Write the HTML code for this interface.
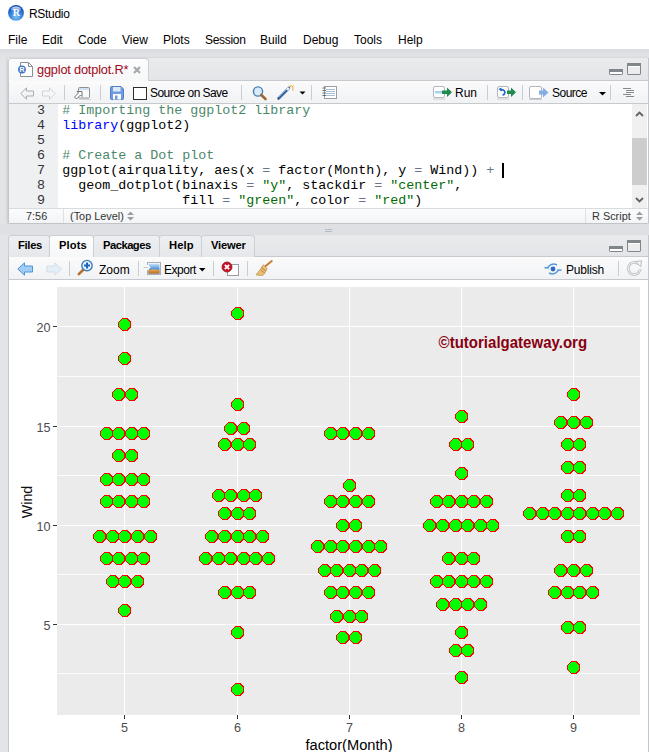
<!DOCTYPE html>
<html><head><meta charset="utf-8">
<style>
*{margin:0;padding:0;box-sizing:border-box}
html,body{width:649px;height:752px;overflow:hidden}
body{position:relative;background:#e3e4e7;font-family:"Liberation Sans",sans-serif;color:#000}
.a{position:absolute}
.ui{font-size:12px;white-space:nowrap;line-height:14px}
.code{font-family:"Liberation Mono",monospace;font-size:13.333px;line-height:15px;white-space:pre}
.cm{color:#4c886b}.kw{color:#0000ff}.st{color:#036a07}.op{color:#687687}
.sep{position:absolute;width:1px;background:#c9ccd0}
svg.a{overflow:visible}
</style></head><body>
<div class="a" style="left:0;top:0;width:649px;height:49px;background:#fff"></div>
<div class="a" style="left:0;top:49px;width:649px;height:9px;background:linear-gradient(#d9dbde,#e3e4e7)"></div>
<!-- R logo -->
<svg class="a" style="left:8px;top:5px" width="16" height="16" viewBox="0 0 16 16">
<defs><radialGradient id="rg" cx="50%" cy="75%" r="65%"><stop offset="0" stop-color="#7fc4f4"/><stop offset="0.55" stop-color="#3a86de"/><stop offset="1" stop-color="#1450c0"/></radialGradient>
<linearGradient id="hl" x1="0" y1="0" x2="0" y2="1"><stop offset="0" stop-color="#fff" stop-opacity="0.85"/><stop offset="1" stop-color="#fff" stop-opacity="0"/></linearGradient></defs>
<circle cx="8" cy="7.8" r="7.9" fill="url(#rg)"/>
<ellipse cx="8" cy="4.2" rx="4.8" ry="2.8" fill="url(#hl)"/>
<text x="8.3" y="11" text-anchor="middle" font-family="Liberation Serif" font-weight="bold" font-size="10" fill="#fff">R</text>
</svg>
<div class="a ui" style="left:29px;top:7px;letter-spacing:-0.3px">RStudio</div>
<div class="a ui" style="left:8px;top:33px">File</div>
<div class="a ui" style="left:42px;top:33px">Edit</div>
<div class="a ui" style="left:78px;top:33px">Code</div>
<div class="a ui" style="left:122px;top:33px">View</div>
<div class="a ui" style="left:163px;top:33px">Plots</div>
<div class="a ui" style="left:205px;top:33px;letter-spacing:-0.3px">Session</div>
<div class="a ui" style="left:260px;top:33px">Build</div>
<div class="a ui" style="left:303px;top:33px">Debug</div>
<div class="a ui" style="left:354px;top:33px">Tools</div>
<div class="a ui" style="left:398px;top:33px">Help</div>

<!-- ============ EDITOR PANE ============ -->
<div class="a" style="left:8px;top:58px;width:641px;height:165px;background:#fff;border:1px solid #c3c7cc;border-top:none;box-shadow:0 1px 3px rgba(0,0,0,0.22)"></div>
<div class="a" style="left:8px;top:58px;width:641px;height:23px;background:linear-gradient(#eaebed,#e4e5e8);border-bottom:1px solid #c6cacf;border-right:1px solid #c3c7cc"></div>
<div class="a" style="left:8px;top:58px;width:141px;height:24px;background:linear-gradient(#fdfdfd,#f6f7f8);border:1px solid #ccd0d4;border-bottom:none;border-radius:4px 4px 0 0"></div>
<!-- doc icon -->
<svg class="a" style="left:18px;top:62px" width="16" height="16" viewBox="0 0 16 16">
<path d="M2.5 0.5 H10.5 L14.5 4.5 V14.5 H2.5 Z" fill="#fff" stroke="#8a8f96"/>
<path d="M10.5 0.5 V4.5 H14.5" fill="none" stroke="#8a8f96"/>
<circle cx="4" cy="7.5" r="3.9" fill="#3b74c0"/>
<text x="4" y="10.2" text-anchor="middle" font-family="Liberation Sans" font-weight="bold" font-size="7" fill="#fff">R</text>
</svg>
<div class="a ui" style="left:37px;top:63px;color:#9e0a22;font-size:12.8px;letter-spacing:-0.2px">ggplot dotplot.R*</div>
<svg class="a" style="left:131.5px;top:65px" width="10" height="10" viewBox="0 0 10 10"><path d="M2 2 L8 8 M8 2 L2 8" stroke="#a4a7ab" stroke-width="2.1"/></svg>
<!-- min/max -->
<svg class="a" style="left:608px;top:62px" width="35" height="14" viewBox="0 0 35 14">
<rect x="1.5" y="7.5" width="13" height="5" rx="0.6" fill="#fff" stroke="#80868a"/><rect x="1" y="7" width="14" height="3" fill="#80868a"/>
<rect x="19.5" y="1.5" width="13" height="11" rx="0.6" fill="#ececee" stroke="#80868a"/><rect x="19" y="1" width="14" height="3" fill="#80868a"/><rect x="20" y="4" width="12" height="1" fill="#fff"/>
</svg>
<!-- toolbar -->
<div class="a" style="left:9px;top:81px;width:639px;height:23px;background:linear-gradient(#fbfbfc,#f1f2f4);border-bottom:1px solid #c6cacf"></div>
<div class="a" style="left:9px;top:81px;width:139px;height:1px;background:#fbfbfc"></div>
<!-- back / fwd -->
<svg class="a" style="left:20px;top:87px" width="36" height="13" viewBox="0 0 36 13">
<path d="M0.8 6.5 L6.5 0.8 V4 H13.5 V9 H6.5 V12.2 Z" fill="#f4f4f4" stroke="#a9acb0" stroke-linejoin="round"/>
<path d="M35.2 6.5 L29.5 0.8 V4 H22.5 V9 H29.5 V12.2 Z" fill="#f7f7f7" stroke="#d0d2d5" stroke-linejoin="round"/>
</svg>
<div class="sep" style="left:64px;top:85px;height:15px"></div>
<svg class="a" style="left:73px;top:86px" width="19" height="14" viewBox="0 0 19 14">
<rect x="5.5" y="1.5" width="11" height="10.5" rx="1" fill="#fbfbfb" stroke="#8d9196"/><rect x="6" y="2" width="10" height="2" fill="#cfe0f4"/>
<path d="M1.5 11 L5.5 7 L4 5.5 H9 V10.5 L7.5 9 L3.5 13 Z" fill="#fff" stroke="#6f7378" stroke-width="1" stroke-linejoin="round"/>
<path d="M6 13.5 H18" stroke="#d2d5d9"/>
</svg>
<div class="sep" style="left:100px;top:85px;height:15px"></div>
<svg class="a" style="left:110px;top:86px" width="14" height="14" viewBox="0 0 14 14">
<path d="M0.5 1.5 Q0.5 0.5 1.5 0.5 H11 L13.5 3 V12.5 Q13.5 13.5 12.5 13.5 H1.5 Q0.5 13.5 0.5 12.5 Z" fill="#6d9de0" stroke="#4f7fc4"/>
<rect x="3" y="1" width="7.5" height="4.5" fill="#dfeaf8"/>
<rect x="3" y="8" width="8" height="5.5" fill="#fff"/><rect x="5" y="9.5" width="2.5" height="4" fill="#6d9de0"/>
</svg>
<div class="a" style="left:133px;top:87px;width:14px;height:13px;border:1px solid #2b2f2b;background:#fff"></div>
<div class="a ui" style="left:150px;top:86px;letter-spacing:-0.55px">Source on Save</div>
<div class="sep" style="left:241px;top:85px;height:15px"></div>
<svg class="a" style="left:252px;top:86px" width="16" height="14" viewBox="0 0 16 14">
<circle cx="6" cy="5.5" r="4.6" fill="#d6ecfb" stroke="#4b7fae" stroke-width="1.4"/>
<path d="M9.3 9 L13.5 13" stroke="#a0662c" stroke-width="2.6" stroke-linecap="round"/>
</svg>
<svg class="a" style="left:277px;top:84px" width="30" height="16" viewBox="0 0 30 16">
<path d="M1.5 14.5 L12 4" stroke="#35609a" stroke-width="2.6" stroke-linecap="round"/><path d="M2 13 L11 4" stroke="#7fb0e0" stroke-width="0.8"/>
<path d="M10 6 L12 4" stroke="#eef4fa" stroke-width="2.2"/>
<g stroke="#f2a020" stroke-width="1"><path d="M14 1 V3 M17 4 H15 M16.5 1.5 L15 3 M12 1.5 L13 2.5 M16.5 6.5 L15 5.5"/></g>
<path d="M22.5 7.5 H28.5 L25.5 10.5 Z" fill="#000"/>
</svg>
<div class="sep" style="left:311px;top:85px;height:15px"></div>
<svg class="a" style="left:321px;top:86px" width="17" height="14" viewBox="0 0 17 14">
<rect x="3.5" y="0.5" width="12" height="12" fill="#fff" stroke="#9a9ea3"/>
<g stroke="#a9bfd6"><path d="M5 3.5 H14 M5 5.5 H14 M5 7.5 H14 M5 9.5 H14"/></g>
<g stroke="#6b7075"><path d="M1.5 2 H5 M1.5 4.5 H5 M1.5 7 H5 M1.5 9.5 H5"/></g>
</svg>
<!-- Run -->
<svg class="a" style="left:432px;top:85px" width="22" height="15" viewBox="0 0 22 15">
<rect x="1.5" y="1.5" width="11" height="11" rx="1.5" fill="#fff" stroke="#b3b7bb"/>
<rect x="3" y="6" width="7" height="2.5" fill="#a8d2f2"/>
<path d="M10 5.5 H15 V2.5 L20 7.2 L15 12 V9 H10 Z" fill="#1e8a4e"/>
<path d="M1 14 H13" stroke="#c8cbd0"/>
</svg>
<div class="a ui" style="left:455px;top:86px">Run</div>
<div class="sep" style="left:487px;top:85px;height:15px"></div>
<svg class="a" style="left:496px;top:85px" width="22" height="15" viewBox="0 0 22 15">
<rect x="1.5" y="1.5" width="11" height="11" rx="1.5" fill="#fff" stroke="#b3b7bb"/>
<path d="M4.5 5.5 A2.6 2.6 0 1 1 6.5 10" fill="none" stroke="#1f62c8" stroke-width="1.6"/>
<path d="M2.5 4 L5.5 2.5 L5.5 6.5 Z" fill="#1f62c8"/>
<path d="M11 5.5 H15 V2.5 L20 7.2 L15 12 V9 H11 Z" fill="#1e8a4e"/>
<path d="M1 14 H13" stroke="#c8cbd0"/>
</svg>
<div class="sep" style="left:522px;top:85px;height:15px"></div>
<svg class="a" style="left:529px;top:85px" width="22" height="15" viewBox="0 0 22 15">
<rect x="0.5" y="1.5" width="12" height="12" rx="1.5" fill="#fff" stroke="#b3b7bb"/>
<path d="M10 5.5 H14 V2.5 L19.5 7.5 L14 12.5 V9.5 H10 Z" fill="#86aee6"/>
<path d="M0 14.5 H13" stroke="#c8cbd0"/>
</svg>
<div class="a ui" style="left:552px;top:86px;letter-spacing:-0.5px">Source</div>
<svg class="a" style="left:599px;top:92px" width="7" height="4" viewBox="0 0 7 4"><path d="M0 0 H7 L3.5 3.5 Z" fill="#000"/></svg>
<div class="sep" style="left:610px;top:85px;height:15px"></div>
<svg class="a" style="left:622px;top:87px" width="13" height="12" viewBox="0 0 13 12">
<g stroke="#85898d"><path d="M1 1.5 H9 M4 3.5 H12 M4 5.5 H12 M1 7.5 H9 M4 9.5 H12"/></g>
</svg>
<!-- gutter -->
<div class="a" style="left:9px;top:104px;width:49px;height:104px;background:#eff0f2"></div>
<div class="a code" style="left:10px;top:102.8px;width:35px;text-align:right;color:#333">3
4
5
6
7
8
9</div>
<div class="a code" style="left:62.3px;top:103.4px"><span class="cm"># Importing the ggplot2 library</span>
<span class="kw">library</span>(ggplot2)

<span class="cm"># Create a Dot plot</span>
ggplot(airquality, aes(x <span class="op">=</span> factor(Month), y <span class="op">=</span> Wind)) <span class="op">+</span> 
  geom_dotplot(binaxis <span class="op">=</span> <span class="st">"y"</span>, stackdir <span class="op">=</span> <span class="st">"center"</span>,
               fill <span class="op">=</span> <span class="st">"green"</span>, color <span class="op">=</span> <span class="st">"red"</span>)</div>
<div class="a" style="left:502px;top:163px;width:2px;height:15px;background:#000"></div>
<!-- scrollbar -->
<div class="a" style="left:632px;top:104px;width:15px;height:104px;background:#f0f0f0"></div>
<div class="a" style="left:632px;top:138px;width:15px;height:47px;background:#cdcdcd"></div>
<svg class="a" style="left:635px;top:110px" width="9" height="96" viewBox="0 0 9 96">
<path d="M1 6 L4.5 2.5 L8 6" stroke="#5f6366" stroke-width="1.8" fill="none"/>
<path d="M1 88 L4.5 91.5 L8 88" stroke="#5f6366" stroke-width="1.8" fill="none"/>
</svg>
<!-- status bar -->
<div class="a" style="left:9px;top:208px;width:639px;height:15px;background:linear-gradient(#fbfcfc,#f3f4f5);border-top:1px solid #d9dcdf"></div>
<div class="sep" style="left:63px;top:209px;height:14px;background:#dfe2e5"></div>
<div class="sep" style="left:585px;top:209px;height:14px;background:#dfe2e5"></div>
<div class="a ui" style="left:26px;top:209px;font-size:10.9px;color:#333">7:56</div>
<div class="a ui" style="left:70px;top:209px;font-size:10.9px;color:#333">(Top Level)</div>
<svg class="a" style="left:127px;top:211px" width="7" height="10" viewBox="0 0 7 10"><path d="M0 4 L3.5 0.5 L7 4 Z M0 6 L3.5 9.5 L7 6 Z" fill="#9a9da0"/></svg>
<div class="a ui" style="left:592px;top:209px;font-size:10.9px;color:#333">R Script</div>
<svg class="a" style="left:636px;top:211px" width="7" height="10" viewBox="0 0 7 10"><path d="M0 4 L3.5 0.5 L7 4 Z M0 6 L3.5 9.5 L7 6 Z" fill="#9a9da0"/></svg>

<!-- splitter -->
<div class="a" style="left:0;top:224px;width:649px;height:11px;background:#dfe0e3"></div>
<div class="a" style="left:325px;top:229px;width:7px;height:1px;background:#b3bdc8"></div>
<div class="a" style="left:325px;top:231px;width:7px;height:1px;background:#b3bdc8"></div>

<!-- ============ PLOTS PANE ============ -->
<div class="a" style="left:8px;top:235px;width:641px;height:520px;background:#fff;border:1px solid #c3c7cc;border-top:none"></div>
<div class="a" style="left:8px;top:235px;width:641px;height:22px;background:linear-gradient(#eaebed,#e4e5e8);border-bottom:1px solid #c6cacf;border-right:1px solid #c3c7cc"></div>
<div class="a" style="left:8px;top:235px;width:42px;height:22px;background:linear-gradient(#eeeff1,#e6e7ea);border:1px solid #ccd0d4;border-bottom:none;border-radius:3px 3px 0 0"></div>
<div class="a" style="left:49px;top:235px;width:45px;height:23px;background:linear-gradient(#fdfdfd,#f6f7f8);border:1px solid #ccd0d4;border-bottom:none;border-radius:3px 3px 0 0"></div>
<div class="a" style="left:93px;top:235px;width:67px;height:22px;background:linear-gradient(#eeeff1,#e6e7ea);border:1px solid #ccd0d4;border-bottom:none;border-radius:3px 3px 0 0"></div>
<div class="a" style="left:159px;top:235px;width:43px;height:22px;background:linear-gradient(#eeeff1,#e6e7ea);border:1px solid #ccd0d4;border-bottom:none;border-radius:3px 3px 0 0"></div>
<div class="a" style="left:201px;top:235px;width:54px;height:22px;background:linear-gradient(#eeeff1,#e6e7ea);border:1px solid #ccd0d4;border-bottom:none;border-radius:3px 3px 0 0"></div>
<div class="a ui" style="left:18px;top:238px;font-weight:bold;font-size:11.2px;letter-spacing:-0.3px">Files</div>
<div class="a ui" style="left:59px;top:238px;font-weight:bold;font-size:11.2px;letter-spacing:0.1px">Plots</div>
<div class="a ui" style="left:103px;top:238px;font-weight:bold;font-size:11.2px;letter-spacing:-0.5px">Packages</div>
<div class="a ui" style="left:169px;top:238px;font-weight:bold;font-size:11.2px;letter-spacing:0.1px">Help</div>
<div class="a ui" style="left:211px;top:238px;font-weight:bold;font-size:11.2px;letter-spacing:-0.2px">Viewer</div>
<svg class="a" style="left:608px;top:239px" width="35" height="14" viewBox="0 0 35 14">
<rect x="1.5" y="7.5" width="13" height="5" rx="0.6" fill="#fff" stroke="#80868a"/><rect x="1" y="7" width="14" height="3" fill="#80868a"/>
<rect x="19.5" y="1.5" width="13" height="11" rx="0.6" fill="#ececee" stroke="#80868a"/><rect x="19" y="1" width="14" height="3" fill="#80868a"/><rect x="20" y="4" width="12" height="1" fill="#fff"/>
</svg>
<div class="a" style="left:9px;top:257px;width:639px;height:23px;background:linear-gradient(#fbfbfc,#f1f2f4);border-bottom:1px solid #c6cacf"></div>
<svg class="a" style="left:17px;top:262px" width="46" height="15" viewBox="0 0 46 15">
<path d="M0.8 7 L7.5 0.8 V4 H15.5 V10 H7.5 V13.2 Z" fill="#9fcdf3" stroke="#4f95d6" stroke-linejoin="round"/>
<path d="M44.5 7 L37.8 0.8 V4 H29.8 V10 H37.8 V13.2 Z" fill="#e4eef7" stroke="#cfdeeb" stroke-linejoin="round"/>
</svg>
<div class="sep" style="left:69px;top:261px;height:15px"></div>
<svg class="a" style="left:77px;top:259px" width="17" height="17" viewBox="0 0 17 17">
<path d="M6 11 L1.8 15.2" stroke="#b5702e" stroke-width="2.6" stroke-linecap="round"/>
<circle cx="10" cy="6.6" r="5.2" fill="#e8f3fc" stroke="#3f7bb5" stroke-width="1.4"/>
<path d="M10 3.6 V9.6 M7 6.6 H13" stroke="#1c64c0" stroke-width="2"/>
</svg>
<div class="a ui" style="left:99px;top:263px">Zoom</div>
<div class="sep" style="left:138px;top:261px;height:15px"></div>
<svg class="a" style="left:143px;top:261px" width="19" height="15" viewBox="0 0 19 15">
<defs><linearGradient id="sky" x1="0" y1="0" x2="0" y2="1"><stop offset="0" stop-color="#cfe6fa"/><stop offset="0.6" stop-color="#3f8ad8"/><stop offset="1" stop-color="#2a6cc0"/></linearGradient>
<linearGradient id="snd" x1="0" y1="0" x2="0" y2="1"><stop offset="0" stop-color="#f0b050"/><stop offset="1" stop-color="#b86a1c"/></linearGradient></defs>
<rect x="4.5" y="1.5" width="13" height="12" fill="#fff" stroke="#a9adb2"/>
<rect x="5.5" y="2.5" width="11" height="10" fill="url(#sky)"/>
<path d="M5.5 9 Q11 7.5 16.5 9 V12.5 H5.5 Z" fill="url(#snd)"/>
<path d="M0.5 6.5 H6 M4 4.5 L6.2 6.5 L4 8.5" stroke="#fff" stroke-width="2" fill="none"/>
<path d="M0.5 6.5 H5.5" stroke="#9aa0a6" stroke-width="0.6"/>
</svg>
<div class="a ui" style="left:164px;top:263px;letter-spacing:-0.45px">Export</div>
<svg class="a" style="left:199px;top:268px" width="7" height="4" viewBox="0 0 7 4"><path d="M0 0 H6.5 L3.25 3.5 Z" fill="#000"/></svg>
<div class="sep" style="left:213px;top:261px;height:15px"></div>
<svg class="a" style="left:221px;top:261px" width="19" height="16" viewBox="0 0 19 16">
<rect x="6.5" y="3.5" width="11" height="11" fill="#fff" stroke="#9a9ea3"/>
<circle cx="6" cy="6" r="5" fill="#c8102a" stroke="#8b1a1a" stroke-width="0.8"/>
<path d="M3.8 3.8 L8.2 8.2 M8.2 3.8 L3.8 8.2" stroke="#fff" stroke-width="1.8"/>
</svg>
<div class="sep" style="left:247px;top:261px;height:15px"></div>
<svg class="a" style="left:255px;top:260px" width="18" height="16" viewBox="0 0 18 16">
<path d="M10 6.5 L16.8 1" stroke="#c47a2c" stroke-width="1.9" stroke-linecap="round"/>
<path d="M8.2 4.8 L12.2 8.6 Q10.5 12.5 8 15.3 Q4 15.6 1 14.8 Q5.5 10 8.2 4.8 Z" fill="#ecc47a" stroke="#b98a40" stroke-width="0.7"/>
<path d="M6.8 7.5 L10.8 11 M5.6 9.6 L9.6 13" stroke="#b07a30" stroke-width="1"/>
<path d="M3 14 L5.5 11.5 M5 14.8 L7.5 12" stroke="#d8a85a" stroke-width="0.6"/>
</svg>
<svg class="a" style="left:544px;top:262px" width="18" height="14" viewBox="0 0 18 14">
<path d="M4 5 Q8 0.5 13 3" stroke="#5b9ad8" stroke-width="1.5" fill="none"/>
<path d="M14 9 Q10 13.5 5 11" stroke="#5b9ad8" stroke-width="1.5" fill="none"/>
<path d="M0.5 5.8 H5" stroke="#5b9ad8" stroke-width="1.6"/><path d="M13 8.2 H17.5" stroke="#5b9ad8" stroke-width="1.6"/>
<circle cx="9" cy="7" r="2.4" fill="#2a6ad0"/>
</svg>
<div class="a ui" style="left:566px;top:263px;letter-spacing:-0.2px">Publish</div>
<div class="sep" style="left:618px;top:261px;height:15px"></div>
<svg class="a" style="left:626px;top:260px" width="17" height="16" viewBox="0 0 17 16">
<path d="M12.2 4 A6 6 0 1 0 14.2 9" stroke="#b9bdc1" stroke-width="2.6" fill="none"/>
<path d="M12.2 4 A6 6 0 1 0 14.2 9" stroke="#f4f5f6" stroke-width="1" fill="none"/>
<path d="M9.5 1.5 L15.5 0.8 L14.8 6.8 Z" fill="#f4f5f6" stroke="#b9bdc1" stroke-width="1"/>
</svg>

<!-- ============ PLOT ============ -->
<svg class="a" style="left:0;top:0" width="649" height="752">
<rect x="57" y="287" width="583" height="428" fill="#ebebeb"/>
<g fill="#fbfbfb" shape-rendering="crispEdges">
<rect x="57" y="376" width="583" height="1"/><rect x="57" y="475" width="583" height="1"/><rect x="57" y="574" width="583" height="1"/><rect x="57" y="673" width="583" height="1"/>
</g>
<g fill="#ffffff" shape-rendering="crispEdges">
<rect x="57" y="326" width="583" height="1"/><rect x="57" y="426" width="583" height="1"/><rect x="57" y="525" width="583" height="1"/><rect x="57" y="624" width="583" height="1"/>
<rect y="287" height="428" x="124" width="1"/><rect y="287" height="428" x="237" width="1"/><rect y="287" height="428" x="349" width="1"/><rect y="287" height="428" x="461" width="1"/><rect y="287" height="428" x="573" width="1"/>
</g>
<g fill="#333333" shape-rendering="crispEdges">
<rect x="53" y="326" width="4" height="1"/><rect x="53" y="426" width="4" height="1"/><rect x="53" y="525" width="4" height="1"/><rect x="53" y="624" width="4" height="1"/>
<rect y="715" height="4" x="124" width="1"/><rect y="715" height="4" x="237" width="1"/><rect y="715" height="4" x="349" width="1"/><rect y="715" height="4" x="461" width="1"/><rect y="715" height="4" x="573" width="1"/>
</g>
<g font-family="Liberation Sans" font-size="12.6" fill="#4d4d4d" text-anchor="end">
<text x="50.5" y="332">20</text><text x="50.5" y="432">15</text><text x="50.5" y="531">10</text><text x="50.5" y="630">5</text>
</g>
<g font-family="Liberation Sans" font-size="12.6" fill="#4d4d4d" text-anchor="middle">
<text x="124.5" y="732">5</text><text x="237.5" y="732">6</text><text x="349.5" y="732">7</text><text x="461.5" y="732">8</text><text x="573.5" y="732">9</text>
</g>
<text x="349" y="750" font-family="Liberation Sans" font-size="14.67" text-anchor="middle">factor(Month)</text>
<text transform="translate(32,502) rotate(-90)" font-family="Liberation Sans" font-size="14.3" fill="#111" text-anchor="middle">Wind</text>
<text x="438.6" y="348" font-family="Liberation Sans" font-weight="bold" font-size="15.6" fill="#880010" textLength="148.5" lengthAdjust="spacingAndGlyphs">©tutorialgateway.org</text>
<g shape-rendering="crispEdges">
<path fill="#ff0000" d="M122 604 L127 604 L131 608 L131 613 L127 617 L122 617 L118 613 L118 608Z M110 575 L115 575 L119 579 L119 584 L115 588 L110 588 L106 584 L106 579Z M122 575 L127 575 L131 579 L131 584 L127 588 L122 588 L118 584 L118 579Z M135 575 L140 575 L144 579 L144 584 L140 588 L135 588 L131 584 L131 579Z M104 552 L109 552 L113 556 L113 561 L109 565 L104 565 L100 561 L100 556Z M116 552 L121 552 L125 556 L125 561 L121 565 L116 565 L112 561 L112 556Z M129 552 L134 552 L138 556 L138 561 L134 565 L129 565 L125 561 L125 556Z M141 552 L146 552 L150 556 L150 561 L146 565 L141 565 L137 561 L137 556Z M97 530 L102 530 L106 534 L106 539 L102 543 L97 543 L93 539 L93 534Z M110 530 L115 530 L119 534 L119 539 L115 543 L110 543 L106 539 L106 534Z M122 530 L127 530 L131 534 L131 539 L127 543 L122 543 L118 539 L118 534Z M135 530 L140 530 L144 534 L144 539 L140 543 L135 543 L131 539 L131 534Z M148 530 L153 530 L157 534 L157 539 L153 543 L148 543 L144 539 L144 534Z M104 495 L109 495 L113 499 L113 504 L109 508 L104 508 L100 504 L100 499Z M116 495 L121 495 L125 499 L125 504 L121 508 L116 508 L112 504 L112 499Z M129 495 L134 495 L138 499 L138 504 L134 508 L129 508 L125 504 L125 499Z M141 495 L146 495 L150 499 L150 504 L146 508 L141 508 L137 504 L137 499Z M104 473 L109 473 L113 477 L113 482 L109 486 L104 486 L100 482 L100 477Z M116 473 L121 473 L125 477 L125 482 L121 486 L116 486 L112 482 L112 477Z M129 473 L134 473 L138 477 L138 482 L134 486 L129 486 L125 482 L125 477Z M141 473 L146 473 L150 477 L150 482 L146 486 L141 486 L137 482 L137 477Z M116 449 L121 449 L125 453 L125 458 L121 462 L116 462 L112 458 L112 453Z M129 449 L134 449 L138 453 L138 458 L134 462 L129 462 L125 458 L125 453Z M104 427 L109 427 L113 431 L113 436 L109 440 L104 440 L100 436 L100 431Z M116 427 L121 427 L125 431 L125 436 L121 440 L116 440 L112 436 L112 431Z M129 427 L134 427 L138 431 L138 436 L134 440 L129 440 L125 436 L125 431Z M141 427 L146 427 L150 431 L150 436 L146 440 L141 440 L137 436 L137 431Z M116 388 L121 388 L125 392 L125 397 L121 401 L116 401 L112 397 L112 392Z M129 388 L134 388 L138 392 L138 397 L134 401 L129 401 L125 397 L125 392Z M122 352 L127 352 L131 356 L131 361 L127 365 L122 365 L118 361 L118 356Z M122 318 L127 318 L131 322 L131 327 L127 331 L122 331 L118 327 L118 322Z M235 683 L240 683 L244 687 L244 692 L240 696 L235 696 L231 692 L231 687Z M235 626 L240 626 L244 630 L244 635 L240 639 L235 639 L231 635 L231 630Z M222 586 L227 586 L231 590 L231 595 L227 599 L222 599 L218 595 L218 590Z M235 586 L240 586 L244 590 L244 595 L240 599 L235 599 L231 595 L231 590Z M247 586 L252 586 L256 590 L256 595 L252 599 L247 599 L243 595 L243 590Z M203 552 L208 552 L212 556 L212 561 L208 565 L203 565 L199 561 L199 556Z M216 552 L221 552 L225 556 L225 561 L221 565 L216 565 L212 561 L212 556Z M228 552 L233 552 L237 556 L237 561 L233 565 L228 565 L224 561 L224 556Z M241 552 L246 552 L250 556 L250 561 L246 565 L241 565 L237 561 L237 556Z M253 552 L258 552 L262 556 L262 561 L258 565 L253 565 L249 561 L249 556Z M266 552 L271 552 L275 556 L275 561 L271 565 L266 565 L262 561 L262 556Z M209 530 L214 530 L218 534 L218 539 L214 543 L209 543 L205 539 L205 534Z M222 530 L227 530 L231 534 L231 539 L227 543 L222 543 L218 539 L218 534Z M235 530 L240 530 L244 534 L244 539 L240 543 L235 543 L231 539 L231 534Z M247 530 L252 530 L256 534 L256 539 L252 543 L247 543 L243 539 L243 534Z M260 530 L265 530 L269 534 L269 539 L265 543 L260 543 L256 539 L256 534Z M222 507 L227 507 L231 511 L231 516 L227 520 L222 520 L218 516 L218 511Z M235 507 L240 507 L244 511 L244 516 L240 520 L235 520 L231 516 L231 511Z M247 507 L252 507 L256 511 L256 516 L252 520 L247 520 L243 516 L243 511Z M216 489 L221 489 L225 493 L225 498 L221 502 L216 502 L212 498 L212 493Z M228 489 L233 489 L237 493 L237 498 L233 502 L228 502 L224 498 L224 493Z M241 489 L246 489 L250 493 L250 498 L246 502 L241 502 L237 498 L237 493Z M253 489 L258 489 L262 493 L262 498 L258 502 L253 502 L249 498 L249 493Z M222 438 L227 438 L231 442 L231 447 L227 451 L222 451 L218 447 L218 442Z M235 438 L240 438 L244 442 L244 447 L240 451 L235 451 L231 447 L231 442Z M247 438 L252 438 L256 442 L256 447 L252 451 L247 451 L243 447 L243 442Z M228 422 L233 422 L237 426 L237 431 L233 435 L228 435 L224 431 L224 426Z M241 422 L246 422 L250 426 L250 431 L246 435 L241 435 L237 431 L237 426Z M235 398 L240 398 L244 402 L244 407 L240 411 L235 411 L231 407 L231 402Z M235 307 L240 307 L244 311 L244 316 L240 320 L235 320 L231 316 L231 311Z M340 631 L345 631 L349 635 L349 640 L345 644 L340 644 L336 640 L336 635Z M353 631 L358 631 L362 635 L362 640 L358 644 L353 644 L349 640 L349 635Z M334 610 L339 610 L343 614 L343 619 L339 623 L334 623 L330 619 L330 614Z M347 610 L352 610 L356 614 L356 619 L352 623 L347 623 L343 619 L343 614Z M359 610 L364 610 L368 614 L368 619 L364 623 L359 623 L355 619 L355 614Z M328 586 L333 586 L337 590 L337 595 L333 599 L328 599 L324 595 L324 590Z M340 586 L345 586 L349 590 L349 595 L345 599 L340 599 L336 595 L336 590Z M353 586 L358 586 L362 590 L362 595 L358 599 L353 599 L349 595 L349 590Z M366 586 L371 586 L375 590 L375 595 L371 599 L366 599 L362 595 L362 590Z M322 564 L327 564 L331 568 L331 573 L327 577 L322 577 L318 573 L318 568Z M334 564 L339 564 L343 568 L343 573 L339 577 L334 577 L330 573 L330 568Z M347 564 L352 564 L356 568 L356 573 L352 577 L347 577 L343 573 L343 568Z M359 564 L364 564 L368 568 L368 573 L364 577 L359 577 L355 573 L355 568Z M372 564 L377 564 L381 568 L381 573 L377 577 L372 577 L368 573 L368 568Z M315 540 L320 540 L324 544 L324 549 L320 553 L315 553 L311 549 L311 544Z M328 540 L333 540 L337 544 L337 549 L333 553 L328 553 L324 549 L324 544Z M340 540 L345 540 L349 544 L349 549 L345 553 L340 553 L336 549 L336 544Z M353 540 L358 540 L362 544 L362 549 L358 553 L353 553 L349 549 L349 544Z M366 540 L371 540 L375 544 L375 549 L371 553 L366 553 L362 549 L362 544Z M378 540 L383 540 L387 544 L387 549 L383 553 L378 553 L374 549 L374 544Z M340 519 L345 519 L349 523 L349 528 L345 532 L340 532 L336 528 L336 523Z M353 519 L358 519 L362 523 L362 528 L358 532 L353 532 L349 528 L349 523Z M328 495 L333 495 L337 499 L337 504 L333 508 L328 508 L324 504 L324 499Z M340 495 L345 495 L349 499 L349 504 L345 508 L340 508 L336 504 L336 499Z M353 495 L358 495 L362 499 L362 504 L358 508 L353 508 L349 504 L349 499Z M366 495 L371 495 L375 499 L375 504 L371 508 L366 508 L362 504 L362 499Z M347 479 L352 479 L356 483 L356 488 L352 492 L347 492 L343 488 L343 483Z M328 427 L333 427 L337 431 L337 436 L333 440 L328 440 L324 436 L324 431Z M340 427 L345 427 L349 431 L349 436 L345 440 L340 440 L336 436 L336 431Z M353 427 L358 427 L362 431 L362 436 L358 440 L353 440 L349 436 L349 431Z M366 427 L371 427 L375 431 L375 436 L371 440 L366 440 L362 436 L362 431Z M459 671 L464 671 L468 675 L468 680 L464 684 L459 684 L455 680 L455 675Z M453 644 L458 644 L462 648 L462 653 L458 657 L453 657 L449 653 L449 648Z M465 644 L470 644 L474 648 L474 653 L470 657 L465 657 L461 653 L461 648Z M459 626 L464 626 L468 630 L468 635 L464 639 L459 639 L455 635 L455 630Z M440 598 L445 598 L449 602 L449 607 L445 611 L440 611 L436 607 L436 602Z M453 598 L458 598 L462 602 L462 607 L458 611 L453 611 L449 607 L449 602Z M465 598 L470 598 L474 602 L474 607 L470 611 L465 611 L461 607 L461 602Z M478 598 L483 598 L487 602 L487 607 L483 611 L478 611 L474 607 L474 602Z M434 575 L439 575 L443 579 L443 584 L439 588 L434 588 L430 584 L430 579Z M446 575 L451 575 L455 579 L455 584 L451 588 L446 588 L442 584 L442 579Z M459 575 L464 575 L468 579 L468 584 L464 588 L459 588 L455 584 L455 579Z M471 575 L476 575 L480 579 L480 584 L476 588 L471 588 L467 584 L467 579Z M484 575 L489 575 L493 579 L493 584 L489 588 L484 588 L480 584 L480 579Z M446 552 L451 552 L455 556 L455 561 L451 565 L446 565 L442 561 L442 556Z M459 552 L464 552 L468 556 L468 561 L464 565 L459 565 L455 561 L455 556Z M471 552 L476 552 L480 556 L480 561 L476 565 L471 565 L467 561 L467 556Z M427 519 L432 519 L436 523 L436 528 L432 532 L427 532 L423 528 L423 523Z M440 519 L445 519 L449 523 L449 528 L445 532 L440 532 L436 528 L436 523Z M453 519 L458 519 L462 523 L462 528 L458 532 L453 532 L449 528 L449 523Z M465 519 L470 519 L474 523 L474 528 L470 532 L465 532 L461 528 L461 523Z M478 519 L483 519 L487 523 L487 528 L483 532 L478 532 L474 528 L474 523Z M490 519 L495 519 L499 523 L499 528 L495 532 L490 532 L486 528 L486 523Z M434 495 L439 495 L443 499 L443 504 L439 508 L434 508 L430 504 L430 499Z M446 495 L451 495 L455 499 L455 504 L451 508 L446 508 L442 504 L442 499Z M459 495 L464 495 L468 499 L468 504 L464 508 L459 508 L455 504 L455 499Z M471 495 L476 495 L480 499 L480 504 L476 508 L471 508 L467 504 L467 499Z M484 495 L489 495 L493 499 L493 504 L489 508 L484 508 L480 504 L480 499Z M459 467 L464 467 L468 471 L468 476 L464 480 L459 480 L455 476 L455 471Z M453 438 L458 438 L462 442 L462 447 L458 451 L453 451 L449 447 L449 442Z M465 438 L470 438 L474 442 L474 447 L470 451 L465 451 L461 447 L461 442Z M459 410 L464 410 L468 414 L468 419 L464 423 L459 423 L455 419 L455 414Z M571 661 L576 661 L580 665 L580 670 L576 674 L571 674 L567 670 L567 665Z M565 621 L570 621 L574 625 L574 630 L570 634 L565 634 L561 630 L561 625Z M577 621 L582 621 L586 625 L586 630 L582 634 L577 634 L573 630 L573 625Z M552 586 L557 586 L561 590 L561 595 L557 599 L552 599 L548 595 L548 590Z M565 586 L570 586 L574 590 L574 595 L570 599 L565 599 L561 595 L561 590Z M577 586 L582 586 L586 590 L586 595 L582 599 L577 599 L573 595 L573 590Z M590 586 L595 586 L599 590 L599 595 L595 599 L590 599 L586 595 L586 590Z M558 564 L563 564 L567 568 L567 573 L563 577 L558 577 L554 573 L554 568Z M571 564 L576 564 L580 568 L580 573 L576 577 L571 577 L567 573 L567 568Z M584 564 L589 564 L593 568 L593 573 L589 577 L584 577 L580 573 L580 568Z M565 530 L570 530 L574 534 L574 539 L570 543 L565 543 L561 539 L561 534Z M577 530 L582 530 L586 534 L586 539 L582 543 L577 543 L573 539 L573 534Z M527 507 L532 507 L536 511 L536 516 L532 520 L527 520 L523 516 L523 511Z M540 507 L545 507 L549 511 L549 516 L545 520 L540 520 L536 516 L536 511Z M552 507 L557 507 L561 511 L561 516 L557 520 L552 520 L548 516 L548 511Z M565 507 L570 507 L574 511 L574 516 L570 520 L565 520 L561 516 L561 511Z M577 507 L582 507 L586 511 L586 516 L582 520 L577 520 L573 516 L573 511Z M590 507 L595 507 L599 511 L599 516 L595 520 L590 520 L586 516 L586 511Z M602 507 L607 507 L611 511 L611 516 L607 520 L602 520 L598 516 L598 511Z M615 507 L620 507 L624 511 L624 516 L620 520 L615 520 L611 516 L611 511Z M565 489 L570 489 L574 493 L574 498 L570 502 L565 502 L561 498 L561 493Z M577 489 L582 489 L586 493 L586 498 L582 502 L577 502 L573 498 L573 493Z M565 461 L570 461 L574 465 L574 470 L570 474 L565 474 L561 470 L561 465Z M577 461 L582 461 L586 465 L586 470 L582 474 L577 474 L573 470 L573 465Z M565 438 L570 438 L574 442 L574 447 L570 451 L565 451 L561 447 L561 442Z M577 438 L582 438 L586 442 L586 447 L582 451 L577 451 L573 447 L573 442Z M558 416 L563 416 L567 420 L567 425 L563 429 L558 429 L554 425 L554 420Z M571 416 L576 416 L580 420 L580 425 L576 429 L571 429 L567 425 L567 420Z M584 416 L589 416 L593 420 L593 425 L589 429 L584 429 L580 425 L580 420Z M571 388 L576 388 L580 392 L580 397 L576 401 L571 401 L567 397 L567 392Z"/>
<path fill="#00ff00" d="M122.5 605 L126.5 605 L130 608.5 L130 612.5 L126.5 616 L122.5 616 L119 612.5 L119 608.5Z M110.5 576 L114.5 576 L118 579.5 L118 583.5 L114.5 587 L110.5 587 L107 583.5 L107 579.5Z M122.5 576 L126.5 576 L130 579.5 L130 583.5 L126.5 587 L122.5 587 L119 583.5 L119 579.5Z M135.5 576 L139.5 576 L143 579.5 L143 583.5 L139.5 587 L135.5 587 L132 583.5 L132 579.5Z M104.5 553 L108.5 553 L112 556.5 L112 560.5 L108.5 564 L104.5 564 L101 560.5 L101 556.5Z M116.5 553 L120.5 553 L124 556.5 L124 560.5 L120.5 564 L116.5 564 L113 560.5 L113 556.5Z M129.5 553 L133.5 553 L137 556.5 L137 560.5 L133.5 564 L129.5 564 L126 560.5 L126 556.5Z M141.5 553 L145.5 553 L149 556.5 L149 560.5 L145.5 564 L141.5 564 L138 560.5 L138 556.5Z M97.5 531 L101.5 531 L105 534.5 L105 538.5 L101.5 542 L97.5 542 L94 538.5 L94 534.5Z M110.5 531 L114.5 531 L118 534.5 L118 538.5 L114.5 542 L110.5 542 L107 538.5 L107 534.5Z M122.5 531 L126.5 531 L130 534.5 L130 538.5 L126.5 542 L122.5 542 L119 538.5 L119 534.5Z M135.5 531 L139.5 531 L143 534.5 L143 538.5 L139.5 542 L135.5 542 L132 538.5 L132 534.5Z M148.5 531 L152.5 531 L156 534.5 L156 538.5 L152.5 542 L148.5 542 L145 538.5 L145 534.5Z M104.5 496 L108.5 496 L112 499.5 L112 503.5 L108.5 507 L104.5 507 L101 503.5 L101 499.5Z M116.5 496 L120.5 496 L124 499.5 L124 503.5 L120.5 507 L116.5 507 L113 503.5 L113 499.5Z M129.5 496 L133.5 496 L137 499.5 L137 503.5 L133.5 507 L129.5 507 L126 503.5 L126 499.5Z M141.5 496 L145.5 496 L149 499.5 L149 503.5 L145.5 507 L141.5 507 L138 503.5 L138 499.5Z M104.5 474 L108.5 474 L112 477.5 L112 481.5 L108.5 485 L104.5 485 L101 481.5 L101 477.5Z M116.5 474 L120.5 474 L124 477.5 L124 481.5 L120.5 485 L116.5 485 L113 481.5 L113 477.5Z M129.5 474 L133.5 474 L137 477.5 L137 481.5 L133.5 485 L129.5 485 L126 481.5 L126 477.5Z M141.5 474 L145.5 474 L149 477.5 L149 481.5 L145.5 485 L141.5 485 L138 481.5 L138 477.5Z M116.5 450 L120.5 450 L124 453.5 L124 457.5 L120.5 461 L116.5 461 L113 457.5 L113 453.5Z M129.5 450 L133.5 450 L137 453.5 L137 457.5 L133.5 461 L129.5 461 L126 457.5 L126 453.5Z M104.5 428 L108.5 428 L112 431.5 L112 435.5 L108.5 439 L104.5 439 L101 435.5 L101 431.5Z M116.5 428 L120.5 428 L124 431.5 L124 435.5 L120.5 439 L116.5 439 L113 435.5 L113 431.5Z M129.5 428 L133.5 428 L137 431.5 L137 435.5 L133.5 439 L129.5 439 L126 435.5 L126 431.5Z M141.5 428 L145.5 428 L149 431.5 L149 435.5 L145.5 439 L141.5 439 L138 435.5 L138 431.5Z M116.5 389 L120.5 389 L124 392.5 L124 396.5 L120.5 400 L116.5 400 L113 396.5 L113 392.5Z M129.5 389 L133.5 389 L137 392.5 L137 396.5 L133.5 400 L129.5 400 L126 396.5 L126 392.5Z M122.5 353 L126.5 353 L130 356.5 L130 360.5 L126.5 364 L122.5 364 L119 360.5 L119 356.5Z M122.5 319 L126.5 319 L130 322.5 L130 326.5 L126.5 330 L122.5 330 L119 326.5 L119 322.5Z M235.5 684 L239.5 684 L243 687.5 L243 691.5 L239.5 695 L235.5 695 L232 691.5 L232 687.5Z M235.5 627 L239.5 627 L243 630.5 L243 634.5 L239.5 638 L235.5 638 L232 634.5 L232 630.5Z M222.5 587 L226.5 587 L230 590.5 L230 594.5 L226.5 598 L222.5 598 L219 594.5 L219 590.5Z M235.5 587 L239.5 587 L243 590.5 L243 594.5 L239.5 598 L235.5 598 L232 594.5 L232 590.5Z M247.5 587 L251.5 587 L255 590.5 L255 594.5 L251.5 598 L247.5 598 L244 594.5 L244 590.5Z M203.5 553 L207.5 553 L211 556.5 L211 560.5 L207.5 564 L203.5 564 L200 560.5 L200 556.5Z M216.5 553 L220.5 553 L224 556.5 L224 560.5 L220.5 564 L216.5 564 L213 560.5 L213 556.5Z M228.5 553 L232.5 553 L236 556.5 L236 560.5 L232.5 564 L228.5 564 L225 560.5 L225 556.5Z M241.5 553 L245.5 553 L249 556.5 L249 560.5 L245.5 564 L241.5 564 L238 560.5 L238 556.5Z M253.5 553 L257.5 553 L261 556.5 L261 560.5 L257.5 564 L253.5 564 L250 560.5 L250 556.5Z M266.5 553 L270.5 553 L274 556.5 L274 560.5 L270.5 564 L266.5 564 L263 560.5 L263 556.5Z M209.5 531 L213.5 531 L217 534.5 L217 538.5 L213.5 542 L209.5 542 L206 538.5 L206 534.5Z M222.5 531 L226.5 531 L230 534.5 L230 538.5 L226.5 542 L222.5 542 L219 538.5 L219 534.5Z M235.5 531 L239.5 531 L243 534.5 L243 538.5 L239.5 542 L235.5 542 L232 538.5 L232 534.5Z M247.5 531 L251.5 531 L255 534.5 L255 538.5 L251.5 542 L247.5 542 L244 538.5 L244 534.5Z M260.5 531 L264.5 531 L268 534.5 L268 538.5 L264.5 542 L260.5 542 L257 538.5 L257 534.5Z M222.5 508 L226.5 508 L230 511.5 L230 515.5 L226.5 519 L222.5 519 L219 515.5 L219 511.5Z M235.5 508 L239.5 508 L243 511.5 L243 515.5 L239.5 519 L235.5 519 L232 515.5 L232 511.5Z M247.5 508 L251.5 508 L255 511.5 L255 515.5 L251.5 519 L247.5 519 L244 515.5 L244 511.5Z M216.5 490 L220.5 490 L224 493.5 L224 497.5 L220.5 501 L216.5 501 L213 497.5 L213 493.5Z M228.5 490 L232.5 490 L236 493.5 L236 497.5 L232.5 501 L228.5 501 L225 497.5 L225 493.5Z M241.5 490 L245.5 490 L249 493.5 L249 497.5 L245.5 501 L241.5 501 L238 497.5 L238 493.5Z M253.5 490 L257.5 490 L261 493.5 L261 497.5 L257.5 501 L253.5 501 L250 497.5 L250 493.5Z M222.5 439 L226.5 439 L230 442.5 L230 446.5 L226.5 450 L222.5 450 L219 446.5 L219 442.5Z M235.5 439 L239.5 439 L243 442.5 L243 446.5 L239.5 450 L235.5 450 L232 446.5 L232 442.5Z M247.5 439 L251.5 439 L255 442.5 L255 446.5 L251.5 450 L247.5 450 L244 446.5 L244 442.5Z M228.5 423 L232.5 423 L236 426.5 L236 430.5 L232.5 434 L228.5 434 L225 430.5 L225 426.5Z M241.5 423 L245.5 423 L249 426.5 L249 430.5 L245.5 434 L241.5 434 L238 430.5 L238 426.5Z M235.5 399 L239.5 399 L243 402.5 L243 406.5 L239.5 410 L235.5 410 L232 406.5 L232 402.5Z M235.5 308 L239.5 308 L243 311.5 L243 315.5 L239.5 319 L235.5 319 L232 315.5 L232 311.5Z M340.5 632 L344.5 632 L348 635.5 L348 639.5 L344.5 643 L340.5 643 L337 639.5 L337 635.5Z M353.5 632 L357.5 632 L361 635.5 L361 639.5 L357.5 643 L353.5 643 L350 639.5 L350 635.5Z M334.5 611 L338.5 611 L342 614.5 L342 618.5 L338.5 622 L334.5 622 L331 618.5 L331 614.5Z M347.5 611 L351.5 611 L355 614.5 L355 618.5 L351.5 622 L347.5 622 L344 618.5 L344 614.5Z M359.5 611 L363.5 611 L367 614.5 L367 618.5 L363.5 622 L359.5 622 L356 618.5 L356 614.5Z M328.5 587 L332.5 587 L336 590.5 L336 594.5 L332.5 598 L328.5 598 L325 594.5 L325 590.5Z M340.5 587 L344.5 587 L348 590.5 L348 594.5 L344.5 598 L340.5 598 L337 594.5 L337 590.5Z M353.5 587 L357.5 587 L361 590.5 L361 594.5 L357.5 598 L353.5 598 L350 594.5 L350 590.5Z M366.5 587 L370.5 587 L374 590.5 L374 594.5 L370.5 598 L366.5 598 L363 594.5 L363 590.5Z M322.5 565 L326.5 565 L330 568.5 L330 572.5 L326.5 576 L322.5 576 L319 572.5 L319 568.5Z M334.5 565 L338.5 565 L342 568.5 L342 572.5 L338.5 576 L334.5 576 L331 572.5 L331 568.5Z M347.5 565 L351.5 565 L355 568.5 L355 572.5 L351.5 576 L347.5 576 L344 572.5 L344 568.5Z M359.5 565 L363.5 565 L367 568.5 L367 572.5 L363.5 576 L359.5 576 L356 572.5 L356 568.5Z M372.5 565 L376.5 565 L380 568.5 L380 572.5 L376.5 576 L372.5 576 L369 572.5 L369 568.5Z M315.5 541 L319.5 541 L323 544.5 L323 548.5 L319.5 552 L315.5 552 L312 548.5 L312 544.5Z M328.5 541 L332.5 541 L336 544.5 L336 548.5 L332.5 552 L328.5 552 L325 548.5 L325 544.5Z M340.5 541 L344.5 541 L348 544.5 L348 548.5 L344.5 552 L340.5 552 L337 548.5 L337 544.5Z M353.5 541 L357.5 541 L361 544.5 L361 548.5 L357.5 552 L353.5 552 L350 548.5 L350 544.5Z M366.5 541 L370.5 541 L374 544.5 L374 548.5 L370.5 552 L366.5 552 L363 548.5 L363 544.5Z M378.5 541 L382.5 541 L386 544.5 L386 548.5 L382.5 552 L378.5 552 L375 548.5 L375 544.5Z M340.5 520 L344.5 520 L348 523.5 L348 527.5 L344.5 531 L340.5 531 L337 527.5 L337 523.5Z M353.5 520 L357.5 520 L361 523.5 L361 527.5 L357.5 531 L353.5 531 L350 527.5 L350 523.5Z M328.5 496 L332.5 496 L336 499.5 L336 503.5 L332.5 507 L328.5 507 L325 503.5 L325 499.5Z M340.5 496 L344.5 496 L348 499.5 L348 503.5 L344.5 507 L340.5 507 L337 503.5 L337 499.5Z M353.5 496 L357.5 496 L361 499.5 L361 503.5 L357.5 507 L353.5 507 L350 503.5 L350 499.5Z M366.5 496 L370.5 496 L374 499.5 L374 503.5 L370.5 507 L366.5 507 L363 503.5 L363 499.5Z M347.5 480 L351.5 480 L355 483.5 L355 487.5 L351.5 491 L347.5 491 L344 487.5 L344 483.5Z M328.5 428 L332.5 428 L336 431.5 L336 435.5 L332.5 439 L328.5 439 L325 435.5 L325 431.5Z M340.5 428 L344.5 428 L348 431.5 L348 435.5 L344.5 439 L340.5 439 L337 435.5 L337 431.5Z M353.5 428 L357.5 428 L361 431.5 L361 435.5 L357.5 439 L353.5 439 L350 435.5 L350 431.5Z M366.5 428 L370.5 428 L374 431.5 L374 435.5 L370.5 439 L366.5 439 L363 435.5 L363 431.5Z M459.5 672 L463.5 672 L467 675.5 L467 679.5 L463.5 683 L459.5 683 L456 679.5 L456 675.5Z M453.5 645 L457.5 645 L461 648.5 L461 652.5 L457.5 656 L453.5 656 L450 652.5 L450 648.5Z M465.5 645 L469.5 645 L473 648.5 L473 652.5 L469.5 656 L465.5 656 L462 652.5 L462 648.5Z M459.5 627 L463.5 627 L467 630.5 L467 634.5 L463.5 638 L459.5 638 L456 634.5 L456 630.5Z M440.5 599 L444.5 599 L448 602.5 L448 606.5 L444.5 610 L440.5 610 L437 606.5 L437 602.5Z M453.5 599 L457.5 599 L461 602.5 L461 606.5 L457.5 610 L453.5 610 L450 606.5 L450 602.5Z M465.5 599 L469.5 599 L473 602.5 L473 606.5 L469.5 610 L465.5 610 L462 606.5 L462 602.5Z M478.5 599 L482.5 599 L486 602.5 L486 606.5 L482.5 610 L478.5 610 L475 606.5 L475 602.5Z M434.5 576 L438.5 576 L442 579.5 L442 583.5 L438.5 587 L434.5 587 L431 583.5 L431 579.5Z M446.5 576 L450.5 576 L454 579.5 L454 583.5 L450.5 587 L446.5 587 L443 583.5 L443 579.5Z M459.5 576 L463.5 576 L467 579.5 L467 583.5 L463.5 587 L459.5 587 L456 583.5 L456 579.5Z M471.5 576 L475.5 576 L479 579.5 L479 583.5 L475.5 587 L471.5 587 L468 583.5 L468 579.5Z M484.5 576 L488.5 576 L492 579.5 L492 583.5 L488.5 587 L484.5 587 L481 583.5 L481 579.5Z M446.5 553 L450.5 553 L454 556.5 L454 560.5 L450.5 564 L446.5 564 L443 560.5 L443 556.5Z M459.5 553 L463.5 553 L467 556.5 L467 560.5 L463.5 564 L459.5 564 L456 560.5 L456 556.5Z M471.5 553 L475.5 553 L479 556.5 L479 560.5 L475.5 564 L471.5 564 L468 560.5 L468 556.5Z M427.5 520 L431.5 520 L435 523.5 L435 527.5 L431.5 531 L427.5 531 L424 527.5 L424 523.5Z M440.5 520 L444.5 520 L448 523.5 L448 527.5 L444.5 531 L440.5 531 L437 527.5 L437 523.5Z M453.5 520 L457.5 520 L461 523.5 L461 527.5 L457.5 531 L453.5 531 L450 527.5 L450 523.5Z M465.5 520 L469.5 520 L473 523.5 L473 527.5 L469.5 531 L465.5 531 L462 527.5 L462 523.5Z M478.5 520 L482.5 520 L486 523.5 L486 527.5 L482.5 531 L478.5 531 L475 527.5 L475 523.5Z M490.5 520 L494.5 520 L498 523.5 L498 527.5 L494.5 531 L490.5 531 L487 527.5 L487 523.5Z M434.5 496 L438.5 496 L442 499.5 L442 503.5 L438.5 507 L434.5 507 L431 503.5 L431 499.5Z M446.5 496 L450.5 496 L454 499.5 L454 503.5 L450.5 507 L446.5 507 L443 503.5 L443 499.5Z M459.5 496 L463.5 496 L467 499.5 L467 503.5 L463.5 507 L459.5 507 L456 503.5 L456 499.5Z M471.5 496 L475.5 496 L479 499.5 L479 503.5 L475.5 507 L471.5 507 L468 503.5 L468 499.5Z M484.5 496 L488.5 496 L492 499.5 L492 503.5 L488.5 507 L484.5 507 L481 503.5 L481 499.5Z M459.5 468 L463.5 468 L467 471.5 L467 475.5 L463.5 479 L459.5 479 L456 475.5 L456 471.5Z M453.5 439 L457.5 439 L461 442.5 L461 446.5 L457.5 450 L453.5 450 L450 446.5 L450 442.5Z M465.5 439 L469.5 439 L473 442.5 L473 446.5 L469.5 450 L465.5 450 L462 446.5 L462 442.5Z M459.5 411 L463.5 411 L467 414.5 L467 418.5 L463.5 422 L459.5 422 L456 418.5 L456 414.5Z M571.5 662 L575.5 662 L579 665.5 L579 669.5 L575.5 673 L571.5 673 L568 669.5 L568 665.5Z M565.5 622 L569.5 622 L573 625.5 L573 629.5 L569.5 633 L565.5 633 L562 629.5 L562 625.5Z M577.5 622 L581.5 622 L585 625.5 L585 629.5 L581.5 633 L577.5 633 L574 629.5 L574 625.5Z M552.5 587 L556.5 587 L560 590.5 L560 594.5 L556.5 598 L552.5 598 L549 594.5 L549 590.5Z M565.5 587 L569.5 587 L573 590.5 L573 594.5 L569.5 598 L565.5 598 L562 594.5 L562 590.5Z M577.5 587 L581.5 587 L585 590.5 L585 594.5 L581.5 598 L577.5 598 L574 594.5 L574 590.5Z M590.5 587 L594.5 587 L598 590.5 L598 594.5 L594.5 598 L590.5 598 L587 594.5 L587 590.5Z M558.5 565 L562.5 565 L566 568.5 L566 572.5 L562.5 576 L558.5 576 L555 572.5 L555 568.5Z M571.5 565 L575.5 565 L579 568.5 L579 572.5 L575.5 576 L571.5 576 L568 572.5 L568 568.5Z M584.5 565 L588.5 565 L592 568.5 L592 572.5 L588.5 576 L584.5 576 L581 572.5 L581 568.5Z M565.5 531 L569.5 531 L573 534.5 L573 538.5 L569.5 542 L565.5 542 L562 538.5 L562 534.5Z M577.5 531 L581.5 531 L585 534.5 L585 538.5 L581.5 542 L577.5 542 L574 538.5 L574 534.5Z M527.5 508 L531.5 508 L535 511.5 L535 515.5 L531.5 519 L527.5 519 L524 515.5 L524 511.5Z M540.5 508 L544.5 508 L548 511.5 L548 515.5 L544.5 519 L540.5 519 L537 515.5 L537 511.5Z M552.5 508 L556.5 508 L560 511.5 L560 515.5 L556.5 519 L552.5 519 L549 515.5 L549 511.5Z M565.5 508 L569.5 508 L573 511.5 L573 515.5 L569.5 519 L565.5 519 L562 515.5 L562 511.5Z M577.5 508 L581.5 508 L585 511.5 L585 515.5 L581.5 519 L577.5 519 L574 515.5 L574 511.5Z M590.5 508 L594.5 508 L598 511.5 L598 515.5 L594.5 519 L590.5 519 L587 515.5 L587 511.5Z M602.5 508 L606.5 508 L610 511.5 L610 515.5 L606.5 519 L602.5 519 L599 515.5 L599 511.5Z M615.5 508 L619.5 508 L623 511.5 L623 515.5 L619.5 519 L615.5 519 L612 515.5 L612 511.5Z M565.5 490 L569.5 490 L573 493.5 L573 497.5 L569.5 501 L565.5 501 L562 497.5 L562 493.5Z M577.5 490 L581.5 490 L585 493.5 L585 497.5 L581.5 501 L577.5 501 L574 497.5 L574 493.5Z M565.5 462 L569.5 462 L573 465.5 L573 469.5 L569.5 473 L565.5 473 L562 469.5 L562 465.5Z M577.5 462 L581.5 462 L585 465.5 L585 469.5 L581.5 473 L577.5 473 L574 469.5 L574 465.5Z M565.5 439 L569.5 439 L573 442.5 L573 446.5 L569.5 450 L565.5 450 L562 446.5 L562 442.5Z M577.5 439 L581.5 439 L585 442.5 L585 446.5 L581.5 450 L577.5 450 L574 446.5 L574 442.5Z M558.5 417 L562.5 417 L566 420.5 L566 424.5 L562.5 428 L558.5 428 L555 424.5 L555 420.5Z M571.5 417 L575.5 417 L579 420.5 L579 424.5 L575.5 428 L571.5 428 L568 424.5 L568 420.5Z M584.5 417 L588.5 417 L592 420.5 L592 424.5 L588.5 428 L584.5 428 L581 424.5 L581 420.5Z M571.5 389 L575.5 389 L579 392.5 L579 396.5 L575.5 400 L571.5 400 L568 396.5 L568 392.5Z"/>

</g>
</svg>
</body></html>
